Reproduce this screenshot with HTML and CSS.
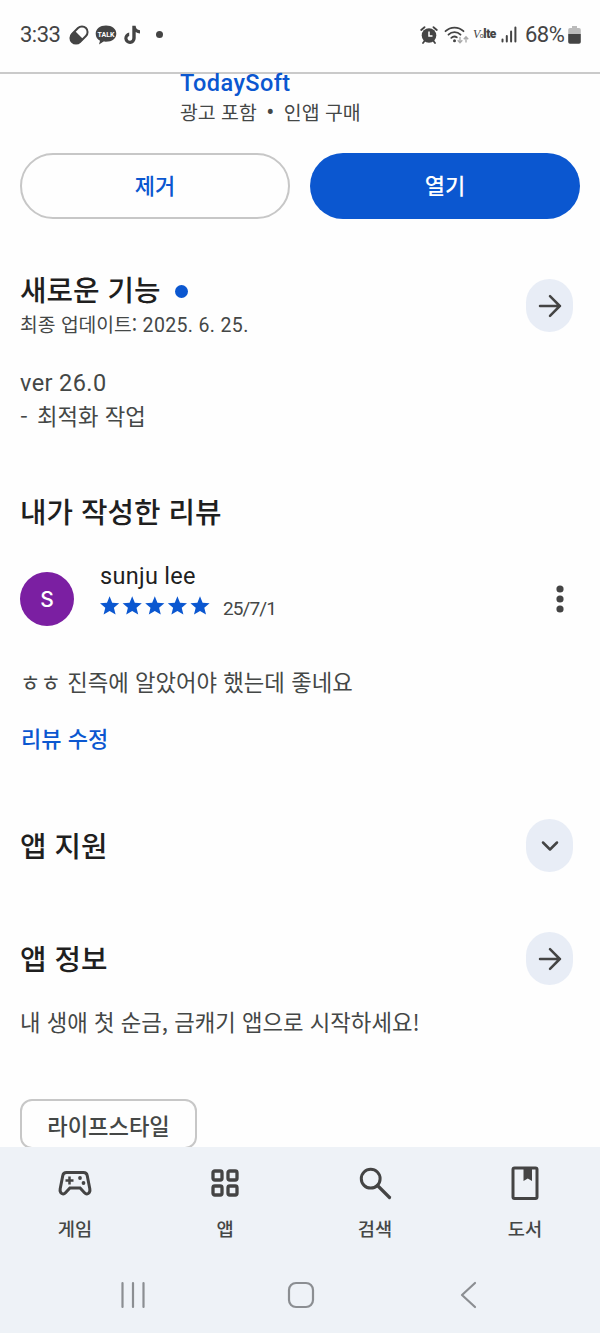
FILE: index.html
```html
<!DOCTYPE html>
<html lang="ko">
<head>
<meta charset="utf-8">
<title>TodaySoft</title>
<link rel="stylesheet" href="styles.css">
</head>
<body>
<div class="screen">
  <header class="status">
    <span class="clock">3:33</span>
    <svg class="ic-pill" width="22" height="22" viewBox="0 0 22 22"><g transform="rotate(-45 11 11)"><rect x="1.200" y="5.400" width="19.600" height="11.200" rx="5.600" fill="none" stroke="#444" stroke-width="2"/><path d="M11 5H7a6 6 0 0 0 0 12h4z" fill="#444"/></g></svg>
    <svg class="ic-talk" width="22" height="22" viewBox="0 0 22 22"><path d="M11 1.500C5 1.500.700 5 .700 9.700c0 3.200 1.700 5.600 4.300 7L4 20.500l4.600-2.900c8 .8 12.700-3 12.700-7.900S17 1.500 11 1.500z" fill="#444"/><text x="11" y="12.500" text-anchor="middle" class="talk-text">TALK</text></svg>
    <svg class="ic-note" width="17" height="20" viewBox="0 0 17 20"><path d="M8.300.800h3.300c.2 2.700 1.600 4.200 4.400 4.500v3.200c-1.700 0-3.100-.5-4.300-1.400v6.200a5.700 5.700 0 1 1-6.500-5.700v3.400a2.400 2.400 0 1 0 3.100 2.300z" fill="#444"/></svg>
    <span class="status-dot"></span>
    <span class="grow"></span>
    <svg class="ic-alarm" width="18" height="18" viewBox="0 0 18 18"><circle cx="9" cy="9.500" r="7.300" fill="#444"/><path d="M1.200 4L4.500 1.200M16.800 4l-3.300-2.800M4.500 15l-1.500 2M13.500 15l1.500 2" stroke="#444" stroke-width="1.800" stroke-linecap="round"/><path d="M9 5.500V10h3.500" stroke="#fff" stroke-width="1.500" fill="none"/></svg>
    <svg class="ic-wifi" width="26" height="20" viewBox="0 0 26 20"><g fill="none" stroke="#444" stroke-width="1.800" stroke-linecap="round"><path d="M1.500 6.200a13 13 0 0 1 18 0M4.500 9.700a8.500 8.500 0 0 1 12 0M7.300 12.900a4.700 4.700 0 0 1 5.500-.7"/></g><circle cx="10.500" cy="15.700" r="1.500" fill="#444"/><path d="M16 12v5.500m-2.300-2.200 2.300 2.500 2.300-2.500M22 17.500V12m-2.200 2.300 2.200-2.500 2.200 2.500" fill="none" stroke="#aaa" stroke-width="1.400"/></svg>
    <span class="volte"><i>V</i><small>o</small><b>lte</b></span>
    <svg class="ic-signal" width="16" height="17" viewBox="0 0 16 17"><path d="M1.500 13.500v2M5.800 10v5.500M10.100 5.500v10M14.400 1.500v14" stroke="#444" stroke-width="2" stroke-linecap="round"/></svg>
    <span class="percent">68%</span>
    <svg class="ic-batt" width="13" height="18" viewBox="0 0 13 18"><path d="M4 0h5v2h2a1.800 1.800 0 0 1 1.800 1.800V8H.2V3.800A1.800 1.800 0 0 1 2 2h2z" fill="#bbb"/><path d="M.2 8h12.600v8a1.800 1.800 0 0 1-1.800 1.800H2A1.800 1.800 0 0 1 .2 16z" fill="#444"/></svg>
  </header>

  <main class="content">
    <div class="developer">TodaySoft</div>
    <div class="meta">광고 포함<span class="bullet">•</span>인앱 구매</div>
    <div class="buttons">
      <button class="btn outline">제거</button>
      <button class="btn filled">열기</button>
    </div>

    <section class="row news">
      <div>
        <h2 class="title">새로운 기능<span class="new-dot"></span></h2>
        <div class="updated">최종 업데이트: <span class="date">2025. 6. 25.</span></div>
      </div>
      <span class="round"><svg width="24" height="24" viewBox="0 0 24 24"><path d="M2 12h20M12 2.200 21.800 12 12 21.800"/></svg></span>
    </section>
    <div class="notes"><div class="version">ver 26.0</div><div><span class="dash">-</span>최적화 작업</div></div>

    <h2 class="title mine">내가 작성한 리뷰</h2>
    <div class="reviewer">
      <span class="avatar">S</span>
      <div class="who">
        <div class="name">sunju lee</div>
        <div class="rating">
          <svg width="112" height="20" viewBox="0 0 112 20"><defs><path id="star" d="M9.600.300l2.600 6.400 7 .5-5.300 4.500 1.700 6.900-6-3.700-6 3.700 1.700-6.900L0 7.200l7-.5z"/></defs><g fill="#0b57d0"><use href="#star"/><use href="#star" x="22.600"/><use href="#star" x="45.200"/><use href="#star" x="67.800"/><use href="#star" x="90.400"/></g></svg>
          <span class="when">25/7/1</span>
        </div>
      </div>
      <svg class="more" width="8" height="28" viewBox="0 0 8 28"><g fill="#444"><circle cx="4" cy="4" r="3.600"/><circle cx="4" cy="14" r="3.600"/><circle cx="4" cy="24" r="3.600"/></g></svg>
    </div>
    <p class="review">ㅎㅎ 진즉에 알았어야 했는데 좋네요</p>
    <a class="edit">리뷰 수정</a>

    <section class="row support">
      <h2 class="title">앱 지원</h2>
      <span class="round"><svg width="24" height="24" viewBox="0 0 24 24"><path d="M5 8.500l7 7 7-7"/></svg></span>
    </section>
    <section class="row info">
      <h2 class="title">앱 정보</h2>
      <span class="round"><svg width="24" height="24" viewBox="0 0 24 24"><path d="M2 12h20M12 2.200 21.800 12 12 21.800"/></svg></span>
    </section>
    <p class="desc">내 생애 첫 순금, 금캐기 앱으로 시작하세요!</p>
    <span class="chip">라이프스타일</span>
  </main>

  <nav class="tabs">
    <a class="tab"><svg width="36" height="36" viewBox="0 0 36 36"><path d="M9.500 7.500h17c2 0 3.300 1 3.700 3l2.600 13.300c.8 5-3.200 6.200-5.300 4l-4.400-4.800H12.900l-4.400 4.800c-2.100 2.200-6.100 1-5.300-4l2.600-13.300c.4-2 1.700-3 3.700-3z" fill="none" stroke="#444" stroke-width="3"/><path d="M12.500 11.500v8M8.500 15.500h8" stroke="#444" stroke-width="2.500"/><circle cx="23" cy="13" r="1.900" fill="#444"/><circle cx="26.500" cy="18" r="1.900" fill="#444"/></svg><span>게임</span></a>
    <a class="tab"><svg width="36" height="36" viewBox="0 0 36 36"><g fill="none" stroke="#444" stroke-width="3.300"><rect x="6" y="6" width="9" height="9" rx="1.800"/><rect x="21" y="6" width="9" height="9" rx="1.800"/><rect x="6" y="21" width="9" height="9" rx="1.800"/><rect x="21" y="21" width="9" height="9" rx="1.800"/></g></svg><span>앱</span></a>
    <a class="tab"><svg width="36" height="36" viewBox="0 0 36 36"><circle cx="13.700" cy="13.700" r="9.400" fill="none" stroke="#444" stroke-width="3"/><path d="M20.500 20.500 32.500 32.500" stroke="#444" stroke-width="3.200" stroke-linecap="round"/></svg><span>검색</span></a>
    <a class="tab"><svg width="36" height="36" viewBox="0 0 36 36"><rect x="6" y="3" width="24" height="30.500" rx="1.500" fill="none" stroke="#444" stroke-width="3"/><path d="M16.500 3H25v13l-4.200-2.500-4.300 2.500z" fill="#444"/></svg><span>도서</span></a>
  </nav>
  <footer class="system">
    <svg width="30" height="30" viewBox="0 0 30 30"><path d="M4.500 3v24M15 3v24M25.500 3v24"/></svg>
    <svg width="30" height="30" viewBox="0 0 30 30"><rect x="3" y="3" width="24" height="24" rx="7"/></svg>
    <svg width="30" height="30" viewBox="0 0 30 30"><path d="M21 3 8 15l13 12"/></svg>
  </footer>
</div>
</body>
</html>
```

FILE: styles.css
```css
* { box-sizing: border-box; }
body {
  margin: 0;
  background: #fefefe;
  color: #444746;
  font-family: "Noto Sans CJK KR", sans-serif;
}
h2, p { margin: 0; }
.screen { width: 600px; height: 1333px; display: flex; flex-direction: column; overflow: hidden; }

.status {
  height: 74px;
  flex: none;
  display: flex;
  align-items: center;
  padding: 0 19px 3px 20px;
  border-bottom: 2px solid #cacaca;
  font-family: Roboto, sans-serif;
  color: #444;
}
.status svg { flex: none; }
.clock { font-size: 22px; width: 48px; letter-spacing: -0.5px; }
.ic-talk { margin-left: 5px; }
.talk-text { font: 700 7px Roboto, sans-serif; fill: #fff; }
.ic-note { margin-left: 7px; }
.status-dot { width: 7px; height: 7px; border-radius: 50%; background: #444; margin-left: 15px; }
.grow { flex: 1; }
.ic-wifi { margin-left: 6px; }
.volte { margin-left: 3px; width: 24px; font-size: 12px; letter-spacing: -0.500px; white-space: nowrap; }
.volte i { font-family: "Liberation Serif", serif; }
.volte small { font-size: 7px; }
.volte b { font-weight: 900; }
.ic-signal { margin-left: 4px; }
.percent { margin-left: 8px; width: 41px; font-size: 22px; letter-spacing: -0.500px; }
.ic-batt { margin-left: 2px; }

.content { height: 1073px; flex: none; padding: 0 20px; display: flex; flex-direction: column; }
.content > * { flex: none; }
.developer { margin-left: 160px; height: 24px; font: 500 23.500px/18px Roboto, sans-serif; letter-spacing: 0.400px; color: #0b57d0; }
.meta { margin-left: 160px; height: 28px; line-height: 28px; font-size: 19.400px; white-space: nowrap; display: flex; }
.bullet { width: 27px; text-align: center; font: 400 24px/29px Roboto, sans-serif; }
.buttons { display: flex; gap: 20px; margin-top: 27px; }
.btn { width: 270px; height: 66px; border-radius: 33px; border: 0; font: 500 22px/30px "Noto Sans CJK KR", sans-serif; padding: 0 0 4px; }
.outline { background: transparent; border: 2px solid #c7c7c7; color: #0b57d0; }
.filled { background: #0b57d0; color: #fff; }

.row { display: flex; justify-content: space-between; align-items: center; padding-right: 7px; }
.title { font-size: 28.800px; line-height: 36px; font-weight: 500; color: #1f1f1f; white-space: nowrap; }
.round { width: 47px; height: 53px; border-radius: 24px; background: #e8edf6; display: flex; align-items: center; justify-content: center; }
.round svg { fill: none; stroke: #444; stroke-width: 2.500; stroke-linecap: round; stroke-linejoin: round; }
.news { margin-top: 53px; height: 67px; }
.new-dot { display: inline-block; width: 13px; height: 13px; border-radius: 50%; background: #0b57d0; margin-left: 14px; vertical-align: 3px; }
.updated { margin-top: 2px; font-size: 19.300px; line-height: 30px; white-space: nowrap; }
.date { font: 400 19.500px/28px Roboto, sans-serif; letter-spacing: 0.350px; }
.notes { margin-top: 27px; font-size: 22.300px; line-height: 33px; }
.notes > div { height: 33px; }
.version { font-family: Roboto, sans-serif; font-size: 23.500px; line-height: 34px; letter-spacing: 0.400px; }
.dash { display: inline-block; width: 17px; }
.mine { margin-top: 61px; }
.reviewer { margin-top: 30px; height: 80px; display: flex; align-items: center; }
.avatar { width: 54px; height: 54px; border-radius: 50%; background: #7b1fa2; color: #fff; font: 500 21px/55px Inter, sans-serif; text-align: center; }
.who { margin-left: 26px; flex: 1; height: 80px; }
.name { height: 33px; font: 400 23.500px/35px Roboto, sans-serif; letter-spacing: 0.300px; color: #1f1f1f; }
.rating { display: flex; height: 28px; align-items: center; gap: 11px; }
.when { font: 400 19px/26px Roboto, sans-serif; letter-spacing: -0.900px; padding-top: 5px; }
.more { margin-right: 16px; }
.review, .desc { font-size: 22.300px; line-height: 34px; white-space: nowrap; }
.review { margin-top: 25px; }
.edit { margin: 22px 0 0 1px; font-size: 22px; line-height: 34px; font-weight: 500; color: #0b57d0; }
.support { margin-top: 65px; }
.info { margin-top: 60px; }
.row.support .title, .row.info .title { padding-bottom: 2px; }
.desc { margin-top: 19px; }
.chip { margin-top: 61px; width: 177px; height: 50px; border: 2px solid #c7c7c7; border-radius: 12px; text-align: center; font-size: 22.200px; line-height: 48px; font-weight: 500; }

.tabs { position: relative; height: 110px; flex: none; background: #eef2f7; display: grid; grid-template-columns: repeat(4, 1fr); padding-top: 18px; }
.tab { display: flex; flex-direction: column; align-items: center; font-size: 18.700px; font-weight: 500; line-height: 28px; gap: 13px; }
.system { flex: 1; background: #eef2f7; display: flex; justify-content: space-between; padding: 23px 116px 0 118px; }
.system svg { fill: none; stroke: #8b8e92; stroke-width: 2.200; stroke-linecap: round; stroke-linejoin: round; }
```
